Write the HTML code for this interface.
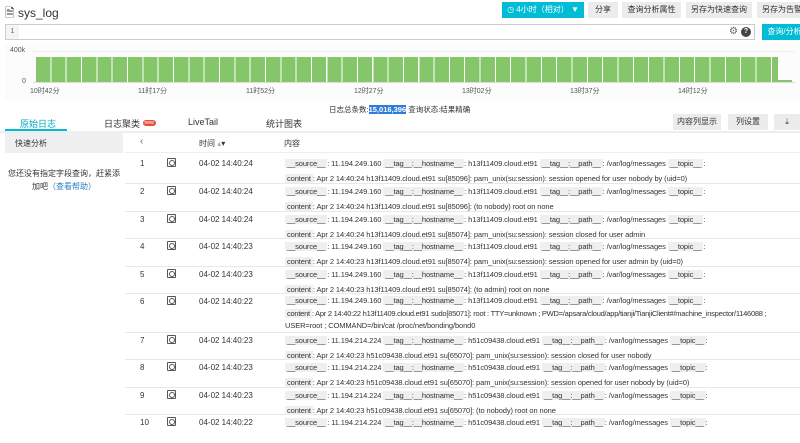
<!DOCTYPE html><html><head><meta charset="utf-8"><style>
*{margin:0;padding:0;box-sizing:border-box}
body{width:800px;height:426px;overflow:hidden;background:#fff;font-family:"Liberation Sans","Noto Sans CJK SC",sans-serif;font-size:8px;color:#333;position:relative}
.a{position:absolute;white-space:nowrap}
.btn{position:absolute;top:2px;height:16px;background:#ececec;font-size:8px;line-height:16px;text-align:center;color:#333}
.k{background:#efefef;padding:0 2px}
.row{position:absolute;left:125px;width:675px;border-bottom:1px solid #e8e8e8}
.row .n{position:absolute;left:15px;top:3px}
.row .i{position:absolute;left:42px;top:2px;width:9px;height:9px;border:1px solid #555;border-radius:1px}
.row .i:after{content:"";position:absolute;left:1px;top:1px;width:4px;height:4px;border:1px solid #555;border-radius:50%}
.row .t{position:absolute;left:74px;top:3px}
.row .c{position:absolute;left:160px;top:0px;line-height:15px;font-size:7.5px;letter-spacing:-0.1px}
.c div{white-space:nowrap;height:15px}
</style></head><body>
<div class="a" style="left:5px;top:4px;font-size:12px;color:#333">🗎&nbsp;sys_log</div>
<div class="btn" style="left:502px;width:82px;background:#00bcd4;color:#fff">◷ 4小时（相对） ▼</div>
<div class="btn" style="left:588px;width:30px">分享</div>
<div class="btn" style="left:622px;width:59px">查询分析属性</div>
<div class="btn" style="left:686px;width:66px">另存为快速查询</div>
<div class="btn" style="left:757px;width:50px">另存为告警</div>
<div class="a" style="left:5px;top:24px;width:750px;height:16px;border:1px solid #ccc;background:#fff"></div>
<div class="a" style="left:6px;top:25px;width:13px;height:14px;background:#f4f4f4;color:#666;font-size:7px;line-height:14px;text-align:center">1</div>
<div class="a" style="left:729px;top:26px;font-size:10px;color:#666">⚙</div>
<div class="a" style="left:741px;top:27px;width:10px;height:10px;border-radius:50%;background:#444;color:#fff;font-size:7px;line-height:10px;text-align:center;font-weight:bold">?</div>
<div class="btn" style="left:762px;top:24px;width:45px;background:#00bcd4;color:#fff">查询/分析</div>
<div class="a" style="left:5px;top:44px;width:795px;height:56px;background:#fcfcfc"></div>
<div class="a" style="left:33px;top:51px;width:762px;border-top:1px solid #eee"></div>
<div class="a" style="left:10px;top:47px;font-size:7px;color:#555">400k</div>
<div class="a" style="left:22px;top:78px;font-size:7px;color:#555">0</div>
<div class="a" style="left:36px;top:57px;width:742px;height:25px;background:repeating-linear-gradient(90deg,#86c66a 0 14.3px,#fff 14.3px 15.33px)"></div>
<div class="a" style="left:778px;top:80px;width:14px;height:2px;background:#86c66a"></div>
<div class="a" style="left:33px;top:82px;width:762px;border-top:1px solid #ddd"></div>
<div class="a" style="left:30px;top:86px;font-size:7px;color:#555">10时42分</div>
<div class="a" style="left:138px;top:86px;font-size:7px;color:#555">11时17分</div>
<div class="a" style="left:246px;top:86px;font-size:7px;color:#555">11时52分</div>
<div class="a" style="left:354px;top:86px;font-size:7px;color:#555">12时27分</div>
<div class="a" style="left:462px;top:86px;font-size:7px;color:#555">13时02分</div>
<div class="a" style="left:570px;top:86px;font-size:7px;color:#555">13时37分</div>
<div class="a" style="left:678px;top:86px;font-size:7px;color:#555">14时12分</div>
<div class="a" style="left:329px;top:104px;font-size:7.5px">日志总条数:<span style="background:#2f7bd8;color:#fff;font-weight:bold">15,016,396</span> 查询状态:结果精确</div>
<div class="a" style="left:20px;top:117px;font-size:9px;color:#00a8c6">原始日志</div>
<div class="a" style="left:5px;top:129px;width:62px;height:2px;background:#00bcd4"></div>
<div class="a" style="left:104px;top:117px;font-size:9px">日志聚类 <span style="background:#e4513a;color:#fff;font-size:5px;border-radius:4px;padding:0 2px;vertical-align:3px">new</span></div>
<div class="a" style="left:188px;top:117px;font-size:9px">LiveTail</div>
<div class="a" style="left:266px;top:117px;font-size:9px">统计图表</div>
<div class="btn" style="left:673px;top:114px;width:48px">内容列显示</div>
<div class="btn" style="left:728px;top:114px;width:40px">列设置</div>
<div class="btn" style="left:774px;top:114px;width:26px">⤓</div>
<div class="a" style="left:0;top:131px;width:800px;height:2px;background:#eee"></div>
<div class="a" style="left:5px;top:133px;width:118px;height:20px;background:#f0f0f0;padding:5px 10px;font-size:8px">快速分析</div>
<div class="a" style="left:5px;top:167px;width:118px;text-align:center;white-space:normal;line-height:13px">您还没有指定字段查询，赶紧添加吧<span style="color:#2a7fc0">（查看帮助）</span></div>
<div class="a" style="left:125px;top:133px;width:675px;height:20px;border-bottom:1px solid #eee"></div>
<div class="a" style="left:140px;top:136px;font-size:10px;color:#666">‹</div>
<div class="a" style="left:199px;top:138px">时间 <span style="color:#aaa">▴</span>▾</div>
<div class="a" style="left:284px;top:138px">内容</div>

<div class="row" style="top:156px;height:28px"><span class="n">1</span><span class="i"></span><span class="t">04-02 14:40:24</span><div class="c"><div><span class="k">__source__</span>: 11.194.249.160 <span class="k">__tag__:__hostname__</span>: h13f11409.cloud.et91 <span class="k">__tag__:__path__</span>: /var/log/messages <span class="k">__topic__</span>:</div><div><span class="k">content</span>: Apr 2 14:40:24 h13f11409.cloud.et91 su[85096]: pam_unix(su:session): session opened for user nobody by (uid=0)</div></div></div>
<div class="row" style="top:184px;height:28px"><span class="n">2</span><span class="i"></span><span class="t">04-02 14:40:24</span><div class="c"><div><span class="k">__source__</span>: 11.194.249.160 <span class="k">__tag__:__hostname__</span>: h13f11409.cloud.et91 <span class="k">__tag__:__path__</span>: /var/log/messages <span class="k">__topic__</span>:</div><div><span class="k">content</span>: Apr 2 14:40:24 h13f11409.cloud.et91 su[85096]: (to nobody) root on none</div></div></div>
<div class="row" style="top:212px;height:27px"><span class="n">3</span><span class="i"></span><span class="t">04-02 14:40:24</span><div class="c"><div><span class="k">__source__</span>: 11.194.249.160 <span class="k">__tag__:__hostname__</span>: h13f11409.cloud.et91 <span class="k">__tag__:__path__</span>: /var/log/messages <span class="k">__topic__</span>:</div><div><span class="k">content</span>: Apr 2 14:40:24 h13f11409.cloud.et91 su[85074]: pam_unix(su:session): session closed for user admin</div></div></div>
<div class="row" style="top:239px;height:28px"><span class="n">4</span><span class="i"></span><span class="t">04-02 14:40:23</span><div class="c"><div><span class="k">__source__</span>: 11.194.249.160 <span class="k">__tag__:__hostname__</span>: h13f11409.cloud.et91 <span class="k">__tag__:__path__</span>: /var/log/messages <span class="k">__topic__</span>:</div><div><span class="k">content</span>: Apr 2 14:40:23 h13f11409.cloud.et91 su[85074]: pam_unix(su:session): session opened for user admin by (uid=0)</div></div></div>
<div class="row" style="top:267px;height:27px"><span class="n">5</span><span class="i"></span><span class="t">04-02 14:40:23</span><div class="c"><div><span class="k">__source__</span>: 11.194.249.160 <span class="k">__tag__:__hostname__</span>: h13f11409.cloud.et91 <span class="k">__tag__:__path__</span>: /var/log/messages <span class="k">__topic__</span>:</div><div><span class="k">content</span>: Apr 2 14:40:23 h13f11409.cloud.et91 su[85074]: (to admin) root on none</div></div></div>
<div class="row" style="top:294px;height:39px"><span class="n">6</span><span class="i"></span><span class="t">04-02 14:40:22</span><div class="c" style="line-height:12.5px;top:1px"><div style="height:12.5px"><span class="k">__source__</span>: 11.194.249.160 <span class="k">__tag__:__hostname__</span>: h13f11409.cloud.et91 <span class="k">__tag__:__path__</span>: /var/log/messages <span class="k">__topic__</span>:</div><div style="height:12.5px;letter-spacing:-0.25px"><span class="k">content</span>: Apr 2 14:40:22 h13f11409.cloud.et91 sudo[85071]: root : TTY=unknown ; PWD=/apsara/cloud/app/tianji/TianjiClient#/machine_inspector/1146088 ;</div><div style="height:12.5px">USER=root ; COMMAND=/bin/cat /proc/net/bonding/bond0</div></div></div>
<div class="row" style="top:333px;height:27px"><span class="n">7</span><span class="i"></span><span class="t">04-02 14:40:23</span><div class="c"><div><span class="k">__source__</span>: 11.194.214.224 <span class="k">__tag__:__hostname__</span>: h51c09438.cloud.et91 <span class="k">__tag__:__path__</span>: /var/log/messages <span class="k">__topic__</span>:</div><div><span class="k">content</span>: Apr 2 14:40:23 h51c09438.cloud.et91 su[65070]: pam_unix(su:session): session closed for user nobody</div></div></div>
<div class="row" style="top:360px;height:28px"><span class="n">8</span><span class="i"></span><span class="t">04-02 14:40:23</span><div class="c"><div><span class="k">__source__</span>: 11.194.214.224 <span class="k">__tag__:__hostname__</span>: h51c09438.cloud.et91 <span class="k">__tag__:__path__</span>: /var/log/messages <span class="k">__topic__</span>:</div><div><span class="k">content</span>: Apr 2 14:40:23 h51c09438.cloud.et91 su[65070]: pam_unix(su:session): session opened for user nobody by (uid=0)</div></div></div>
<div class="row" style="top:388px;height:27px"><span class="n">9</span><span class="i"></span><span class="t">04-02 14:40:23</span><div class="c"><div><span class="k">__source__</span>: 11.194.214.224 <span class="k">__tag__:__hostname__</span>: h51c09438.cloud.et91 <span class="k">__tag__:__path__</span>: /var/log/messages <span class="k">__topic__</span>:</div><div><span class="k">content</span>: Apr 2 14:40:23 h51c09438.cloud.et91 su[65070]: (to nobody) root on none</div></div></div>
<div class="row" style="top:415px;height:28px;border:none"><span class="n">10</span><span class="i"></span><span class="t">04-02 14:40:22</span><div class="c"><div><span class="k">__source__</span>: 11.194.214.224 <span class="k">__tag__:__hostname__</span>: h51c09438.cloud.et91 <span class="k">__tag__:__path__</span>: /var/log/messages <span class="k">__topic__</span>:</div></div></div>
</body></html>
